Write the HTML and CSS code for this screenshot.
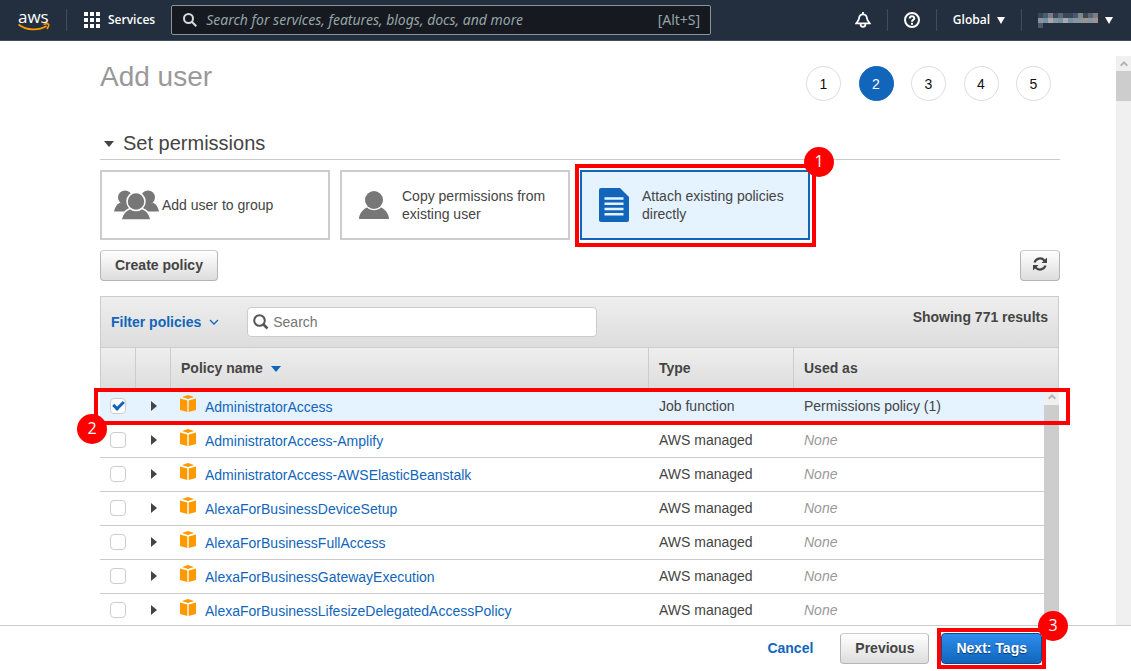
FILE: index.html
```html
<!DOCTYPE html>
<html lang="en">
<head>
<meta charset="utf-8">
<meta name="viewport" content="width=device-width, initial-scale=1">
<title>Add user</title>
<link rel="stylesheet" href="styles.css">
</head>
<body>
<svg class="defs" aria-hidden="true">
  <symbol id="cube" viewBox="0 0 16 17"><path fill="#ff9900" d="M8 0l6 2-6 2-6-2zM0 3.400l7.300 2.100V17L0 15zM16 3.400L8.700 5.500V17l7.300-2z"/></symbol>
  <symbol id="up" viewBox="0 0 8 7"><path fill="none" stroke="#b4b4b4" stroke-width="2" d="M.7 5.700L4 2.400l3.300 3.300"/></symbol>
</svg>
<header class="topbar">
  <a class="logo" href="#" aria-label="AWS home"><span class="logo-text">aws</span>
    <svg width="32" height="8" viewBox="0 0 32 8"><path fill="none" stroke="#f90" stroke-width="1.800" d="M.5 1.500c8.500 6.300 20 6.300 28 1.500"/><path fill="none" stroke="#f90" stroke-width="1.500" d="M25.500 1.200c2.500-.6 4.500-.6 5 0s-.3 3-1.500 4.800"/></svg>
  </a>
  <button class="services" type="button">
    <svg width="16" height="16" viewBox="0 0 16 16" fill="#fff"><path d="M0 0h4v4H0zM6 0h4v4H6zM12 0h4v4h-4zM0 6h4v4H0zM6 6h4v4H6zM12 6h4v4h-4zM0 12h4v4H0zM6 12h4v4H6zM12 12h4v4h-4z"/></svg>
    Services
  </button>
  <label class="global-search">
    <svg width="14" height="14" viewBox="0 0 14 14" fill="none" stroke="#d5dbdb" stroke-width="2"><circle cx="5.500" cy="5.500" r="4.500"/><path d="M8.800 8.800l4.500 4.500"/></svg>
    <input type="text" aria-label="Search services" placeholder="Search for services, features, blogs, docs, and more">
    <span>[Alt+S]</span>
  </label>
  <nav class="tools" aria-label="Account tools">
    <button type="button" aria-label="Notifications"><svg width="16" height="16" viewBox="0 0 16 16" fill="none" stroke="#fff" stroke-width="1.800"><path d="M8 0v2.500M1.200 11.300h13.600C13.900 9.600 12.300 9 12 6.500 11.700 3.700 10.500 2.400 8 2.400S4.300 3.700 4 6.500C3.700 9 2.100 9.600 1.200 11.300zM5.500 11.500c0 4.600 5 4.600 5 0"/></svg></button>
    <button type="button" aria-label="Help"><svg width="16" height="16" viewBox="0 0 16 16" fill="none" stroke="#fff" stroke-width="2"><circle cx="8" cy="8" r="7"/><path d="M5.700 6.600C5.700 3.500 10.300 3.600 10.300 6.200 10.300 8 8 7.800 8 9.700M8 10.800v2"/></svg></button>
    <button type="button">Global <i class="caret"></i></button>
    <button class="account" type="button" aria-label="Account">
      <svg width="60" height="15" viewBox="0 0 12 3" shape-rendering="crispEdges"><path fill="#3b4757" d="M0 0h12v1H0z"/><path fill="#41606f" d="M1 0h1v1H1z"/><path fill="#7f7c85" d="M2 0h1v1H2zM11 0h1v1h-1z"/><path fill="#5c6672" d="M4 0h1v1H4zM10 0h1v1h-1z"/><path fill="#525374" d="M7 0h1v1H7z"/><path fill="#7f8a80" d="M8 0h1v1H8z"/><path fill="#8795a0" d="M0 1h12v1H0z"/><path fill="#7391a2" d="M1 1h1v1H1zM4 1h1v1H4zM6 1h1v1H6z"/><path fill="#aaa6ad" d="M2 1h1v1H2zM5 1h1v1H5z"/><path fill="#a2928f" d="M9 1h1v1H9zM11 1h1v1h-1z"/><path fill="#4c5968" d="M0 2h1v1H0z"/></svg>
      <i class="caret"></i>
    </button>
  </nav>
</header>
<main class="main">
  <div class="content">
    <div class="heading">
      <h1>Add user</h1>
      <ol class="steps"><li>1</li><li class="current" aria-current="step">2</li><li>3</li><li>4</li><li>5</li></ol>
    </div>
    <h2><svg width="10" height="6" viewBox="0 0 10 6"><path fill="#444" d="M0 0h10L5 6z"/></svg>Set permissions</h2>
    <div class="cards">
      <button class="card group" type="button">
        <svg width="45" height="30" viewBox="0 0 45 30" fill="#777"><circle cx="11" cy="7.500" r="7"/><circle cx="34" cy="7.500" r="7"/><path d="M0 21.500c1-4.500 2.500-7 5.500-8.500L17 14v7.500zM45 21.500c-1-4.500-2.500-7-5.500-8.500L28 14v7.500z"/><path stroke="#fff" stroke-width="1.500" d="M7 30C8 24 11 20.500 16 18.500h12C34 20.500 36 24 37 30z"/><circle cx="22" cy="11.500" r="9" stroke="#fff" stroke-width="1.500"/></svg>
        <span>Add user to group</span>
      </button>
      <button class="card" type="button">
        <svg width="30" height="30" viewBox="0 0 30 30" fill="#777"><path d="M0 29c0-5 3.500-9.500 8-11.500 4 3.500 10 3.500 14 0 4.500 2 8 6.500 8 11.500z"/><circle cx="15" cy="10" r="9"/></svg>
        <span>Copy permissions from existing user</span>
      </button>
      <div class="marked">
        <button class="card selected" type="button">
          <svg width="30" height="34" viewBox="0 0 30 34"><path fill="#1166bb" d="M2 0h19l9 9v23a2 2 0 0 1-2 2H2a2 2 0 0 1-2-2V2a2 2 0 0 1 2-2z"/><path stroke="#e5f2ff" stroke-width="2.500" d="M5.500 10.500h19M5.500 15.700h19M5.500 21h19M5.500 26.200h19"/></svg>
          <span>Attach existing policies directly</span>
        </button>
        <div class="mark mark-card"><b>1</b></div>
      </div>
    </div>
    <div class="actions">
      <button class="btn" type="button">Create policy</button>
      <button class="btn refresh" type="button" aria-label="Refresh"><svg width="14" height="14" viewBox="0 0 14 14"><path fill="none" stroke="#444" stroke-width="2.200" d="M1.500 5.500C3 1 8.500.2 11.500 3.500M12.500 8.500C11 13 5.500 13.800 2.500 10.500"/><path fill="#444" d="M14 .5V6H8.500zM0 13.500V8h5.500z"/></svg></button>
    </div>
    <section class="policies">
      <div class="toolbar">
        <button class="filter" type="button">Filter policies <svg width="10" height="6" viewBox="0 0 10 6"><path fill="none" stroke="#1166bb" stroke-width="1.300" d="M1 1l4 4 4-4"/></svg></button>
        <label class="search">
          <svg width="16" height="16" viewBox="0 0 16 16" fill="none" stroke="#555" stroke-width="2"><circle cx="6.500" cy="6.500" r="5.300"/><path stroke-width="2.500" d="M10.500 10.500l4 4"/></svg>
          <input type="text" placeholder="Search" aria-label="Search policies">
        </label>
        <strong class="count">Showing 771 results</strong>
      </div>
      <div class="grid">
        <table>
          <colgroup><col class="c-check"><col class="c-open"><col><col class="c-type"><col class="c-used"></colgroup>
          <thead><tr><th></th><th></th><th>Policy name <svg class="sort" width="10" height="6" viewBox="0 0 10 6"><path fill="#1166bb" d="M0 0h10L5 6z"/></svg></th><th>Type</th><th>Used as</th></tr></thead>
          <tbody>
            <tr class="on"><td><input type="checkbox" checked aria-label="AdministratorAccess"></td><td><button class="open" type="button" aria-label="Expand"></button></td><td><a href="#"><svg width="16" height="17"><use href="#cube"/></svg>AdministratorAccess</a></td><td>Job function</td><td>Permissions policy (1)</td></tr>
            <tr><td><input type="checkbox" aria-label="AdministratorAccess-Amplify"></td><td><button class="open" type="button" aria-label="Expand"></button></td><td><a href="#"><svg width="16" height="17"><use href="#cube"/></svg>AdministratorAccess-Amplify</a></td><td>AWS managed</td><td><em>None</em></td></tr>
            <tr><td><input type="checkbox" aria-label="AdministratorAccess-AWSElasticBeanstalk"></td><td><button class="open" type="button" aria-label="Expand"></button></td><td><a href="#"><svg width="16" height="17"><use href="#cube"/></svg>AdministratorAccess-AWSElasticBeanstalk</a></td><td>AWS managed</td><td><em>None</em></td></tr>
            <tr><td><input type="checkbox" aria-label="AlexaForBusinessDeviceSetup"></td><td><button class="open" type="button" aria-label="Expand"></button></td><td><a href="#"><svg width="16" height="17"><use href="#cube"/></svg>AlexaForBusinessDeviceSetup</a></td><td>AWS managed</td><td><em>None</em></td></tr>
            <tr><td><input type="checkbox" aria-label="AlexaForBusinessFullAccess"></td><td><button class="open" type="button" aria-label="Expand"></button></td><td><a href="#"><svg width="16" height="17"><use href="#cube"/></svg>AlexaForBusinessFullAccess</a></td><td>AWS managed</td><td><em>None</em></td></tr>
            <tr><td><input type="checkbox" aria-label="AlexaForBusinessGatewayExecution"></td><td><button class="open" type="button" aria-label="Expand"></button></td><td><a href="#"><svg width="16" height="17"><use href="#cube"/></svg>AlexaForBusinessGatewayExecution</a></td><td>AWS managed</td><td><em>None</em></td></tr>
            <tr><td><input type="checkbox" aria-label="AlexaForBusinessLifesizeDelegatedAccessPolicy"></td><td><button class="open" type="button" aria-label="Expand"></button></td><td><a href="#"><svg width="16" height="17"><use href="#cube"/></svg>AlexaForBusinessLifesizeDelegatedAccessPolicy</a></td><td>AWS managed</td><td><em>None</em></td></tr>
          </tbody>
        </table>
        <div class="list-scroll"><svg width="8" height="7"><use href="#up"/></svg></div>
        <div class="mark mark-row"><b>2</b></div>
      </div>
    </section>
  </div>
  <div class="page-scroll"><svg width="8" height="7"><use href="#up"/></svg><div class="thumb"></div></div>
</main>
<footer class="footer">
  <a class="cancel" href="#">Cancel</a>
  <button class="btn" type="button">Previous</button>
  <div class="marked">
    <button class="btn primary" type="button">Next: Tags</button>
    <div class="mark mark-next"><b>3</b></div>
  </div>
</footer>
</body>
</html>
```

FILE: styles.css
```css
*, *::before { box-sizing: border-box; }
body {
  margin: 0;
  height: 100vh;
  display: flex;
  flex-direction: column;
  overflow: hidden;
  background: #fff;
  color: #444;
  font: 14px/18px "Liberation Sans", Arial, sans-serif;
}
button, input { font: inherit; color: inherit; }
button { cursor: pointer; }
svg { display: block; flex: none; }
a { color: #1166bb; text-decoration: none; }
.defs { position: absolute; width: 0; height: 0; }

/* Top navigation */
.topbar {
  flex: none;
  display: flex;
  align-items: center;
  height: 41px;
  padding-left: 18px;
  background: #232f3e;
  border-bottom: 1px solid #414d5c;
  color: #fff;
  font: 14px/20px "Noto Sans", "Open Sans", sans-serif;
}
.logo { width: 48px; color: #fff; }
.logo-text { display: block; font: 17px/13px "Open Sans", sans-serif; }
.services, .tools button {
  display: flex;
  align-items: center;
  height: 22px;
  padding: 0 16px;
  border: 0;
  border-left: 1px solid #414d5c;
  background: none;
  font: 600 12px/20px "Open Sans", sans-serif;
}
.services { gap: 8px; padding-left: 17px; }
.global-search {
  display: flex;
  align-items: center;
  gap: 9px;
  width: 540px;
  height: 30px;
  padding: 0 10px 0 11px;
  background: #16191f;
  border: 1px solid #879596;
  border-radius: 2px;
  color: #95a5a6;
}
.global-search input {
  flex: 1;
  min-width: 0;
  padding: 0;
  border: 0;
  outline: 0;
  background: none;
}
.global-search input::placeholder { color: #95a5a6; font-style: italic; opacity: 1; }
.tools { display: flex; margin-left: auto; padding-right: 2px; }
.tools button { gap: 7px; }
.tools button:first-child { border-left: 0; }
.caret { border: solid transparent; border-width: 7px 4px 0; border-top-color: #fff; }

/* Page */
.main { flex: 1; min-height: 0; display: flex; overflow: hidden; }
.content { flex: 1; min-width: 0; padding: 25px 56px 0 100px; }
.heading { display: flex; justify-content: space-between; align-items: flex-start; }
h1 { margin: 0; color: #999; font-weight: 400; font-size: 28px; line-height: 22px; }
.steps {
  display: flex;
  justify-content: space-between;
  width: 245px;
  margin: 0 9px 0 0;
  padding: 0;
  list-style: none;
  color: #111;
}
.steps li {
  width: 35px;
  height: 35px;
  border: 1px solid #ddd;
  border-radius: 50%;
  line-height: 34px;
  text-align: center;
}
.steps .current { background: #1166bb; border-color: #1166bb; color: #fff; }
h2 {
  display: flex;
  align-items: center;
  gap: 9px;
  margin: 27px 0 10px;
  padding-left: 4px;
  border-bottom: 1px solid #ccc;
  font-weight: 400;
  font-size: 20px;
  line-height: 31px;
}
.cards { display: flex; gap: 10px; }
.card {
  display: flex;
  align-items: center;
  gap: 13px;
  width: 230px;
  height: 70px;
  padding: 0 16px 0 17px;
  border: 2px solid #ccc;
  background: #fff;
  text-align: left;
}
.card.group { gap: 3px; padding-left: 12px; }
.card.selected { border-color: #1166bb; background: #e5f2ff; }
.actions { display: flex; justify-content: space-between; margin: 10px 0 15px; }
.btn {
  height: 31px;
  padding: 0 14px 2px;
  border: 1px solid #b5b5b5;
  border-top-color: #ccc;
  border-radius: 4px;
  background: linear-gradient(#fff, #ddd);
  font-weight: 700;
}
.btn.refresh { width: 40px; padding: 0 12px 3px; }
.btn.primary {
  display: block;
  border-color: #0d4b8c;
  background: linear-gradient(#2e8dee, #1166bb);
  color: #fff;
  text-shadow: 0 1px 1px #063a70;
}

/* Policy list */
.policies { margin-right: 1px; }
.toolbar {
  display: flex;
  align-items: center;
  height: 51px;
  padding: 0 10px;
  border: 1px solid #ccc;
  border-bottom: 0;
  background: linear-gradient(#eee, #ddd);
}
.filter {
  display: flex;
  align-items: center;
  gap: 8px;
  padding: 0;
  border: 0;
  background: none;
  color: #1166bb;
  font-weight: 700;
}
.search {
  display: flex;
  align-items: center;
  gap: 4px;
  width: 350px;
  height: 30px;
  margin-left: 28px;
  padding: 0 5px;
  border: 1px solid #ccc;
  border-radius: 4px;
  background: #fff;
}
.search input { flex: 1; min-width: 0; padding: 0; border: 0; outline: 0; background: none; }
.search input::placeholder { color: #757575; opacity: 1; }
.count { align-self: flex-start; margin: 11px 0 0 auto; }
.grid { position: relative; }
table { width: 100%; table-layout: fixed; border-collapse: separate; border-spacing: 0; }
.c-check, .c-open { width: 35px; }
.c-type { width: 145px; }
.c-used { width: 266px; }
th {
  height: 43px;
  padding: 0 10px 2px;
  border-top: 1px solid #ccc;
  border-left: 1px solid #ccc;
  background: linear-gradient(#eee, #ddd);
  text-align: left;
}
th:last-child { border-right: 1px solid #ccc; }
th, td { vertical-align: middle; }
.sort { display: inline-block; margin: 0 0 1px 4px; }
td { height: 34px; padding: 0 10px 2px; border-bottom: 1px solid #ccc; }
td:nth-child(n+4) { padding-left: 11px; }
.on td { background: #e5f2ff; }
td a { display: flex; align-items: flex-end; gap: 9px; }
td a svg { margin-bottom: 4px; }
td em { color: #999; }
td input {
  appearance: none;
  display: block;
  width: 16px;
  height: 16px;
  margin: 0;
  border: 1px solid #ccc;
  border-radius: 4px;
  background: #fff;
}
td input:checked::before {
  content: "";
  display: block;
  width: 11px;
  height: 7px;
  margin: 2px;
  border: solid #1166bb;
  border-width: 0 0 3px 3px;
  transform: rotate(-45deg);
}
.open {
  display: block;
  margin: 0 6px;
  padding: 0;
  border: solid transparent;
  border-width: 5px 0 5px 6px;
  border-left-color: #444;
  background: none;
}

/* Scroll bars */
.list-scroll {
  position: absolute;
  top: 42px;
  right: 0;
  bottom: 0;
  width: 15px;
  padding: 4px;
  background: linear-gradient(#f0f0f0 16px, #cdcdcd 16px);
}
.page-scroll { width: 15px; margin-top: 15px; background: #f0f0f0; }
.page-scroll svg { margin: 4px; }
.thumb { height: 30px; background: #cdcdcd; }

/* Footer */
.footer {
  flex: none;
  display: flex;
  align-items: center;
  height: 46px;
  padding-right: 89px;
  justify-content: flex-end;
  border-top: 1px solid #ccc;
}
.cancel { margin-right: 27px; padding-bottom: 2px; font-weight: 700; }
.footer .marked { margin-left: 12px; }

/* Numbered highlights */
.marked { position: relative; }
.mark { position: absolute; z-index: 2; border: 4px solid #f00; pointer-events: none; }
.mark b {
  position: absolute;
  width: 30px;
  height: 30px;
  border-radius: 50%;
  background: #f00;
  color: #fff;
  font: 16px/29px "Open Sans", sans-serif;
  text-align: center;
}
.mark-card { inset: -6px -6px -7px -5px; }
.mark-row { top: 41px; left: -6px; right: -11px; height: 37px; }
.mark-next { inset: -5px -4px; }
.mark-card b { top: -21px; right: -22px; }
.mark-row b { top: 22px; left: -21px; }
.mark-next b { top: -21px; right: -26px; }
```
